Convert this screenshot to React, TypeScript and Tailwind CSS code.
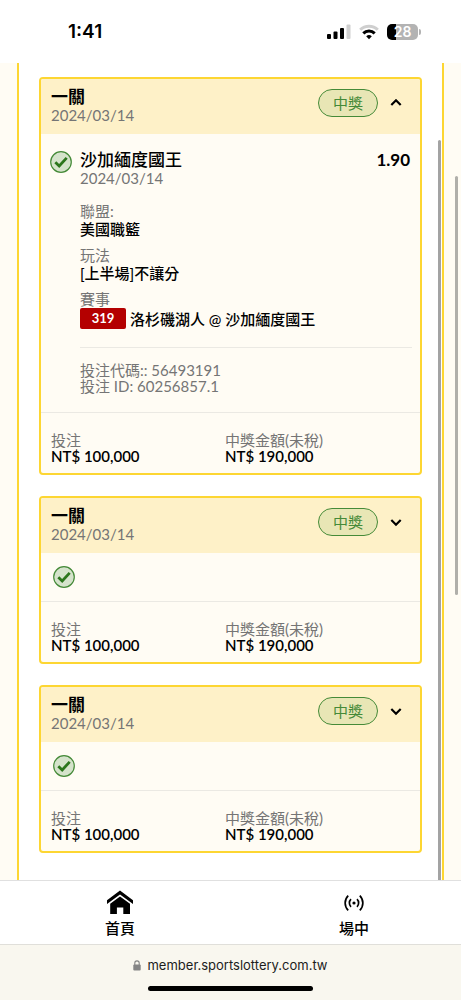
import { useState } from "react";

type Leg = {
  team: string;
  date: string;
  odds: string;
  league: string;
  play: string;
  matchNo: string;
  match: string;
  code: string;
  betId: string;
};

type Bet = { id: number; title: string; date: string; status: string; stake: string; payout: string; leg: Leg };

const leg: Leg = {
  team: "沙加緬度國王",
  date: "2024/03/14",
  odds: "1.90",
  league: "美國職籃",
  play: "[上半場]不讓分",
  matchNo: "319",
  match: "洛杉磯湖人 @ 沙加緬度國王",
  code: "56493191",
  betId: "60256857.1"
};

const bets: Bet[] = [1, 2, 3].map((id) => ({
  id,
  title: "一關",
  date: "2024/03/14",
  status: "中獎",
  stake: "NT$ 100,000",
  payout: "NT$ 190,000",
  leg
}));

function StatusBar() {
  return (
    <header className="flex h-[63px] shrink-0 items-center justify-between bg-white pr-10 pl-17 font-['Inter',sans-serif]">
      <span className="text-[19px] leading-6 font-semibold text-black">1:41</span>
      <div className="flex items-center gap-2">
        <svg className="h-4 w-6" viewBox="0 0 24 16" aria-hidden="true">
          <rect x="0" y="10" width="4" height="5" rx="1" />
          <rect x="6.5" y="7.5" width="4" height="7.5" rx="1" />
          <rect x="13" y="4" width="4" height="11" rx="1" />
          <rect x="19.5" y="0.5" width="4" height="14.5" rx="1" fill="#cfcfcf" />
        </svg>
        <svg className="h-4 w-5" viewBox="0 0 20 16" fill="none" strokeWidth="3" aria-hidden="true">
          <path d="M1.2 5.8a12.5 12.5 0 0 1 17.6 0" stroke="#cfcfcf" />
          <path d="M4.3 9.4a8.1 8.1 0 0 1 11.4 0" stroke="#000" />
          <path d="M10 15.2 7.2 12.3a4 4 0 0 1 5.6 0z" fill="#000" />
        </svg>
        <div className="flex items-center gap-px">
          <div className="flex h-4 w-[31px] items-center justify-center rounded-[5px] bg-linear-to-r from-black from-28% to-[#b3b3b3] to-28%">
            <span className="text-sm leading-4 font-semibold text-white">28</span>
          </div>
          <span className="h-1.5 w-0.5 rounded-r-full bg-[#b3b3b3]" />
        </div>
      </div>
    </header>
  );
}

function WinIcon() {
  return (
    <svg className="h-[22px] w-[22px] shrink-0" viewBox="0 0 22 22" fill="none" aria-hidden="true">
      <circle cx="11" cy="11" r="10.3" fill="#d5e3cb" stroke="#458a38" strokeWidth="1.2" />
      <path d="M5.3 11.2l3.9 3.7 7.5-8" stroke="#2c761c" strokeWidth="2.8" />
    </svg>
  );
}

function LegDetails({ leg }: { leg: Leg }) {
  return (
    <div className="flex gap-2 pt-[17px] pr-2 pb-[18px] pl-[9px]">
      <WinIcon />
      <div className="min-w-0 flex-1">
        <div className="flex justify-between pr-0.5 text-[17px] leading-[18px] text-black">
          <h3 className="font-medium">{leg.team}</h3>
          <span className="font-bold">{leg.odds}</span>
        </div>
        <p className="text-[15px] leading-[18px] text-[#757575]">{leg.date}</p>
        <dl className="mt-[15px] flex flex-col gap-2 text-[15px] leading-[18px]">
          <div>
            <dt className="text-[#757575]">聯盟:</dt>
            <dd className="font-medium text-black">{leg.league}</dd>
          </div>
          <div>
            <dt className="text-[#757575]">玩法</dt>
            <dd className="font-medium text-black">{leg.play}</dd>
          </div>
          <div>
            <dt className="text-[#757575]">賽事</dt>
            <dd className="flex items-center gap-1 font-medium text-black">
              <span className="w-[46px] rounded-xs bg-[#b40000] text-center text-[13px] leading-[21px] font-bold text-white">
                {leg.matchNo}
              </span>
              {leg.match}
            </dd>
          </div>
        </dl>
        <div className="mt-[18px] border-t border-[#ebe9e3] pt-[14px] text-[15px] leading-4 text-[#757575]">
          <p>投注代碼:: {leg.code}</p>
          <p>投注 ID: {leg.betId}</p>
        </div>
      </div>
    </div>
  );
}

function Amount({ label, value }: { label: string; value: string }) {
  return (
    <div>
      <dt className="text-[#757575]">{label}</dt>
      <dd className="font-semibold text-black">{value}</dd>
    </div>
  );
}

function BetCard({ bet, defaultOpen }: { bet: Bet; defaultOpen: boolean }) {
  const [open, setOpen] = useState(defaultOpen);

  return (
    <article className="overflow-hidden rounded-sm border-2 border-[#fdd632] bg-[#fffcf4]">
      <div className="flex items-center justify-between bg-[#fef1c8] pt-[9px] pr-3 pb-[10px] pl-[10px]">
        <div className="leading-[18px]">
          <h2 className="text-[17px] font-bold text-black">{bet.title}</h2>
          <p className="text-[15px] text-[#757575]">{bet.date}</p>
        </div>
        <div className="flex items-center gap-1.5 pb-1.5">
          <span className="rounded-full border border-[#458a38] bg-[#e8e6b5] px-[14px] text-[15px] leading-[26px] text-[#458a38]">
            {bet.status}
          </span>
          <button
            type="button"
            aria-label="展開明細"
            aria-expanded={open}
            onClick={() => setOpen(!open)}
            className="flex size-6 items-center justify-center"
          >
            <svg className="size-3" viewBox="0 0 12 12" fill="none" stroke="#000" strokeWidth="2.2">
              <path d={open ? "M1.3 8 6 3.3 10.7 8" : "M1.3 4 6 8.7 10.7 4"} />
            </svg>
          </button>
        </div>
      </div>
      {open ? (
        <LegDetails leg={bet.leg} />
      ) : (
        <div className="px-3 py-[13px]">
          <WinIcon />
        </div>
      )}
      <dl className="grid grid-cols-[174px_1fr] border-t border-[#ebe9e3] pt-[19px] pr-2 pb-[9px] pl-[10px] text-[15px] leading-4">
        <Amount label="投注" value={bet.stake} />
        <Amount label="中獎金額(未稅)" value={bet.payout} />
      </dl>
    </article>
  );
}

function BottomNav() {
  return (
    <nav className="flex h-16 shrink-0 justify-between border-t border-[#e0e0e0] bg-white pr-[92px] pl-[105px] text-[15px] leading-5 font-medium text-black">
      <a href="#home" className="flex flex-col items-center pt-[9px]">
        <svg className="h-[26px] w-[26px]" viewBox="0 0 26 26" aria-hidden="true">
          <path d="M13 0.5 26 10.2V14L13 4.6 0 14V10.2z" />
          <path d="M13 6.5 23 13.7V24H16.3V17.5H9.9V24H3.2V13.7z" />
        </svg>
        <span className="mt-0.5">首頁</span>
      </a>
      <a href="#live" className="flex flex-col items-center pt-[9px]">
        <svg className="h-[26px] w-[22px]" viewBox="0 0 22 26" fill="none" stroke="#000" strokeWidth="1.7" aria-hidden="true">
          <circle cx="11" cy="13" r="1.6" fill="#000" stroke="none" />
          <path d="M8 9.2a5.3 5.3 0 0 0 0 7.6M14 9.2a5.3 5.3 0 0 1 0 7.6" />
          <path d="M5.2 5.6a10.5 10.5 0 0 0 0 14.8M16.8 5.6a10.5 10.5 0 0 1 0 14.8" />
        </svg>
        <span className="mt-0.5">場中</span>
      </a>
    </nav>
  );
}

function BrowserBar() {
  return (
    <footer className="flex h-14 shrink-0 flex-col items-center border-t border-[#e0dfda] bg-[#f9f7ef] pt-[11px] font-['Inter',sans-serif]">
      <div className="flex items-center gap-1.5 text-[13px] leading-[18px] text-[#1c1c1c]">
        <svg className="h-[11px] w-2" viewBox="0 0 8 11" aria-hidden="true">
          <rect x="0.3" y="4.6" width="7.4" height="6" rx="1" fill="#858585" />
          <path d="M1.8 5V3.1a2.2 2.2 0 0 1 4.4 0V5" fill="none" stroke="#858585" strokeWidth="1.1" />
        </svg>
        member.sportslottery.com.tw
      </div>
      <div className="mt-3 h-[5px] w-[165px] rounded-full bg-black" />
    </footer>
  );
}

export default function App() {
  return (
    <div className="relative flex min-h-screen flex-col bg-[#fffcf4] font-['Lato','Noto_Sans_CJK_TC',sans-serif]">
      <StatusBar />
      <main className="flex flex-1 flex-col px-[17px]">
        <div className="relative flex flex-1 flex-col gap-[21px] border-x-2 border-[#fdd632] bg-white px-5 pt-[14px] pb-6">
          {bets.map((bet, index) => (
            <BetCard key={bet.id} bet={bet} defaultOpen={index === 0} />
          ))}
          <div className="absolute top-[77px] right-px bottom-0 w-[3px] rounded-t-full bg-[#a3a3a3]" />
        </div>
      </main>
      <BottomNav />
      <BrowserBar />
      <div className="absolute top-44 right-[3px] h-[419px] w-[3px] rounded-full bg-[#b0afaa]" />
    </div>
  );
}
